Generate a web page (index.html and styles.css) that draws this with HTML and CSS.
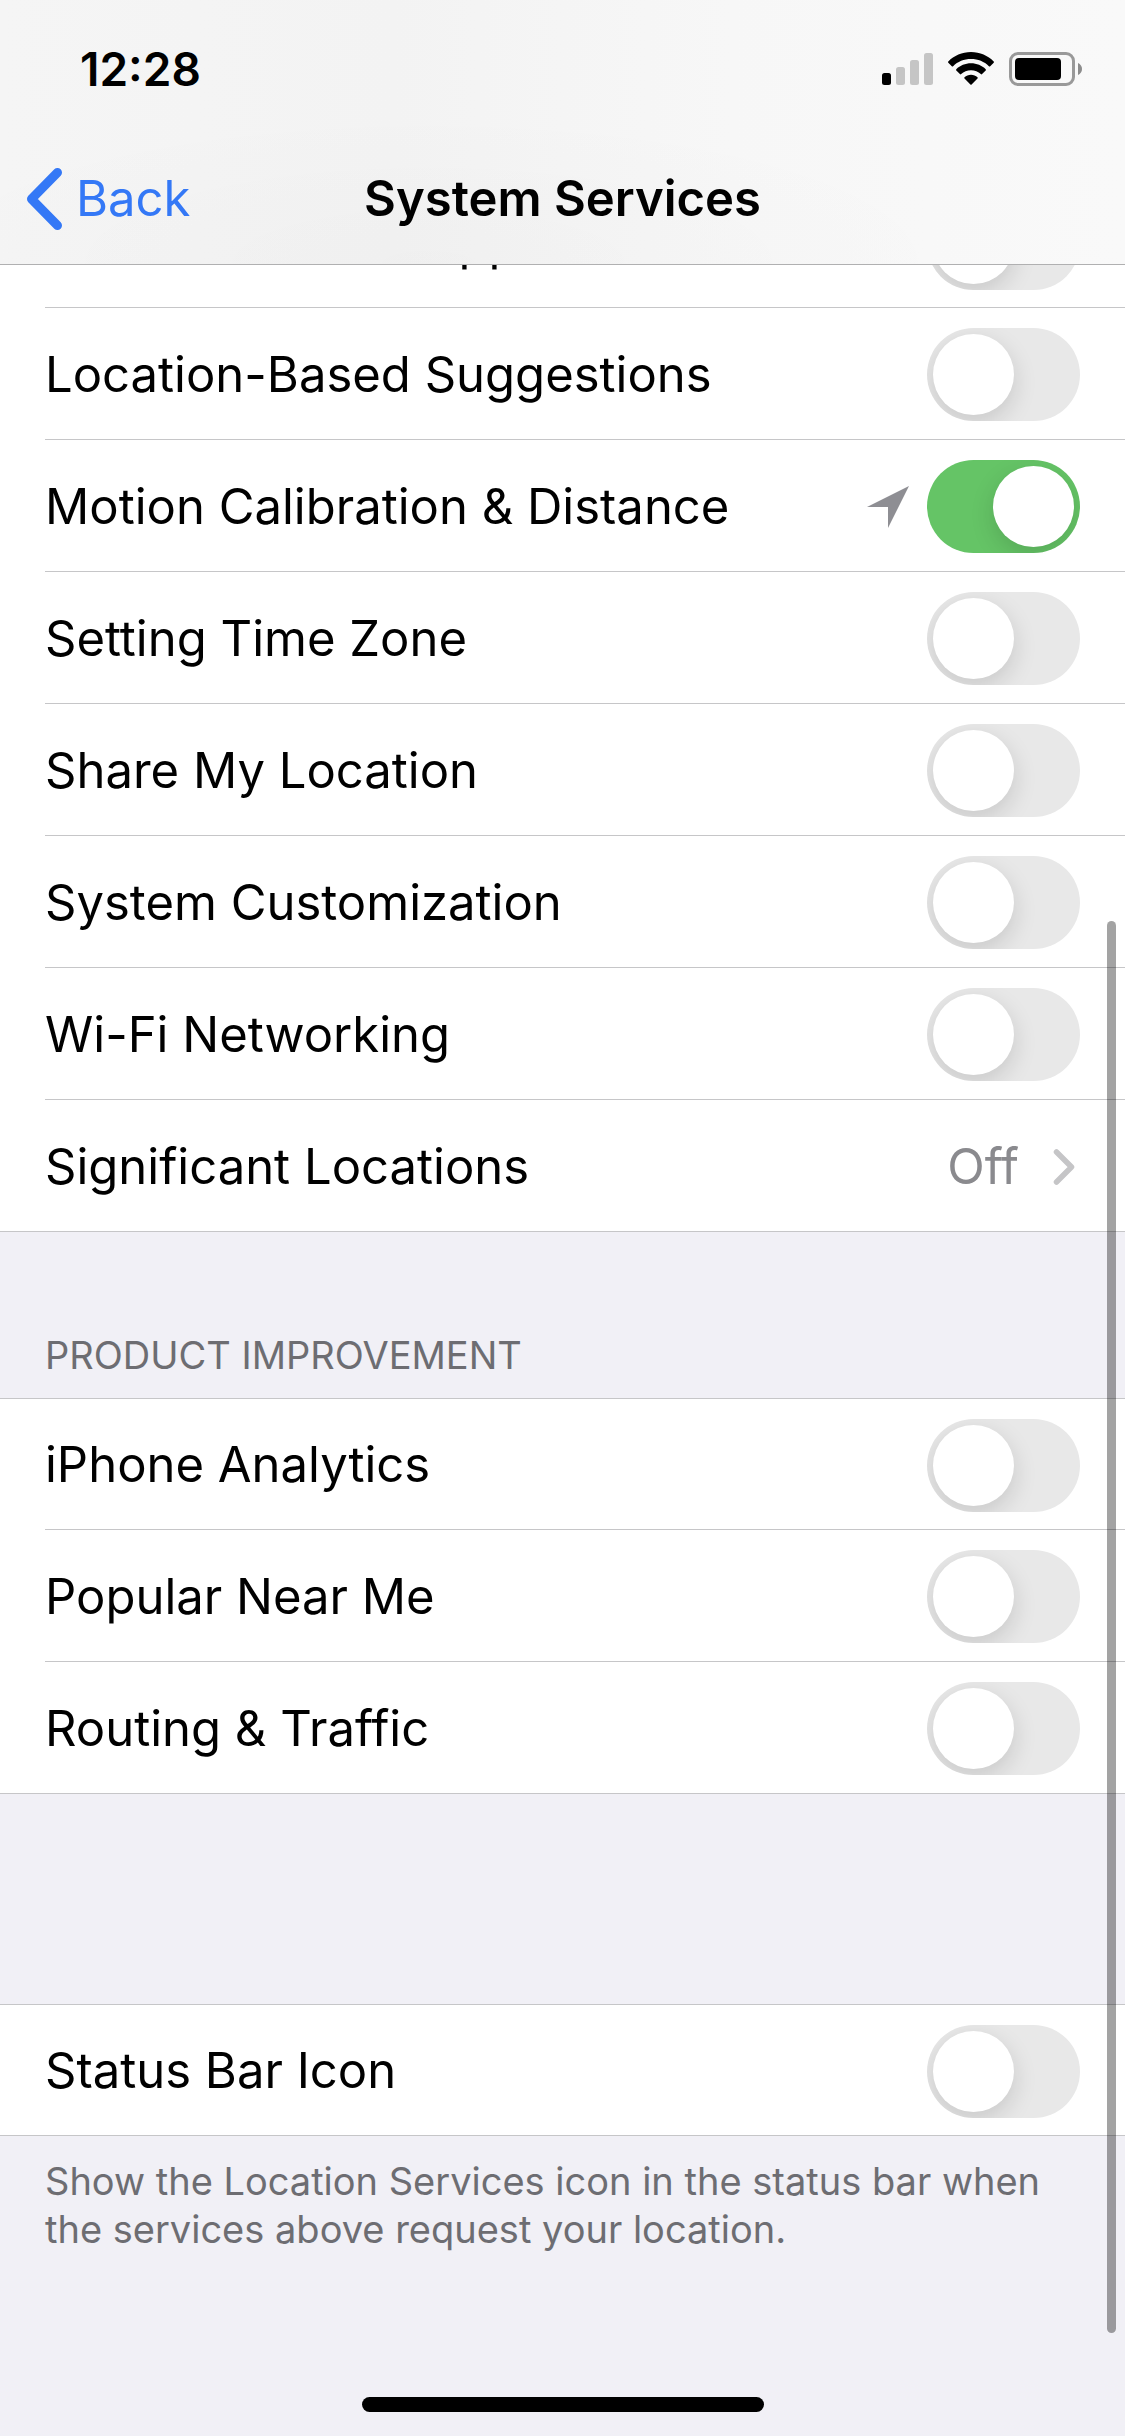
FILE: index.html
```html
<!DOCTYPE html>
<html lang="en">
<head>
<meta charset="utf-8">
<meta name="viewport" content="width=device-width, initial-scale=1">
<title>System Services</title>
<link rel="stylesheet" href="styles.css">
</head>
<body>
<header class="top-bar">
  <div class="status-bar">
    <time class="clock">12:28</time>
    <div class="status-icons">
      <svg width="51" height="34" viewBox="0 0 51 34" role="img" aria-label="Signal: one bar">
        <rect x="0" y="21" width="9" height="12" rx="2.5"/>
        <g fill="#c5c5c5">
          <rect x="14" y="15" width="9" height="18" rx="2.5"/>
          <rect x="28" y="8" width="9" height="25" rx="2.5"/>
          <rect x="42" y="1" width="9" height="32" rx="2.5"/>
        </g>
      </svg>
      <svg width="46" height="34" viewBox="0 0 46 34" role="img" aria-label="Wi-Fi">
        <path d="M23 0C14 0 6 3.6.3 9.4c-.4.4-.4.9 0 1.300l3.500 3.500c.4.4.9.4 1.300 0C9.700 9.700 16 7.100 23 7.100s13.300 2.600 17.900 7.100c.4.4.9.4 1.300 0l3.500-3.500c.4-.4.4-.9 0-1.300C40 3.600 32 0 23 0z"/>
        <path d="M23 11.300c-5.700 0-10.900 2.300-14.700 5.900-.4.400-.4.900 0 1.300l3.600 3.600c.4.400.9.400 1.300 0 2.500-2.400 6-3.800 9.800-3.800s7.300 1.400 9.800 3.800c.4.400.9.400 1.300 0l3.600-3.600c.4-.4.4-.9 0-1.300C33.900 13.600 28.700 11.300 23 11.300z"/>
        <path d="M23 22.800c-2.500 0-4.800.9-6.500 2.400-.4.400-.4.900 0 1.300l5.900 6c.4.400.8.400 1.200 0l5.900-6c.4-.4.4-.9 0-1.300-1.700-1.500-4-2.400-6.500-2.400z"/>
      </svg>
      <svg width="73" height="34" viewBox="0 0 73 34" role="img" aria-label="Battery">
        <rect x="1.500" y="1.500" width="63" height="31" rx="7.500" fill="none" stroke="#999" stroke-width="3"/>
        <rect x="6" y="6" width="46" height="22" rx="4"/>
        <path d="M69 11c2.500 1 4 3.400 4 6s-1.500 5-4 6z" fill="#8c8c8c"/>
      </svg>
    </div>
  </div>
  <nav class="nav-bar">
    <a class="back" href="#">
      <svg width="38" height="64" viewBox="0 0 38 64" aria-hidden="true"><path d="M32.500 5.500L6.500 32l26 26.500" fill="none" stroke="currentColor" stroke-width="9" stroke-linecap="round" stroke-linejoin="round"/></svg>
      <span>Back</span>
    </a>
    <h1 class="title">System Services</h1>
  </nav>
</header>

<main class="content">
  <ul class="group group-scrolled">
    <li><label class="row"><span class="name">Location-Based Apple Ads</span><input class="switch" type="checkbox" role="switch"></label></li>
    <li><label class="row"><span class="name">Location-Based Suggestions</span><input class="switch" type="checkbox" role="switch"></label></li>
    <li><label class="row"><span class="name">Motion Calibration &amp; Distance</span>
      <svg class="arrow" width="42" height="42" viewBox="0 0 42 42" aria-hidden="true"><path d="M42 0L21 42V21H0z" fill="#8e8e93"/></svg>
      <input class="switch" type="checkbox" role="switch" checked></label></li>
    <li><label class="row"><span class="name">Setting Time Zone</span><input class="switch" type="checkbox" role="switch"></label></li>
    <li><label class="row"><span class="name">Share My Location</span><input class="switch" type="checkbox" role="switch"></label></li>
    <li><label class="row"><span class="name">System Customization</span><input class="switch" type="checkbox" role="switch"></label></li>
    <li><label class="row"><span class="name">Wi-Fi Networking</span><input class="switch" type="checkbox" role="switch"></label></li>
    <li><a class="row" href="#"><span class="name">Significant Locations</span><span class="value">Off</span>
      <svg class="chevron" width="22" height="38" viewBox="0 0 22 38" aria-hidden="true"><path d="M3.500 4L18.500 19l-15 15" fill="none" stroke="#c5c5c7" stroke-width="5.500" stroke-linecap="round" stroke-linejoin="round"/></svg></a></li>
  </ul>

  <section>
    <h2 class="group-title">PRODUCT IMPROVEMENT</h2>
    <ul class="group">
      <li><label class="row"><span class="name">iPhone Analytics</span><input class="switch" type="checkbox" role="switch"></label></li>
      <li><label class="row"><span class="name">Popular Near Me</span><input class="switch" type="checkbox" role="switch"></label></li>
      <li><label class="row"><span class="name">Routing &amp; Traffic</span><input class="switch" type="checkbox" role="switch"></label></li>
    </ul>
  </section>

  <section class="status-section">
    <ul class="group">
      <li><label class="row"><span class="name">Status Bar Icon</span><input class="switch" type="checkbox" role="switch"></label></li>
    </ul>
    <p class="note">Show the Location Services icon in the status bar when the services above request your location.</p>
  </section>
</main>

<div class="scroll-thumb"></div>
<div class="home-indicator"></div>
</body>
</html>
```

FILE: styles.css
```css
* { box-sizing: border-box; }

body {
  margin: 0;
  min-height: 100vh;
  background: #f1f0f6;
  color: #000;
  font-family: Inter, "Liberation Sans", sans-serif;
  font-size: 49px;
  line-height: 60px;
}

svg { display: block; flex: none; }
a { color: inherit; text-decoration: none; }
h1, h2, p, ul { margin: 0; padding: 0; }
ul { list-style: none; }

/* Top bar */
.top-bar {
  border-bottom: 1px solid #b0b0b1;
  background:
    radial-gradient(ellipse 50% 60% at 38% 100%, rgba(0, 0, 0, .015), transparent),
    linear-gradient(90deg, #f5f5f5, #f3f3f3 35%, #f7f7f7 65%, #f9f9f9);
}

.status-bar {
  display: flex;
  align-items: center;
  justify-content: space-between;
  height: 132px;
  padding: 6px 43px 0 80px;
}

.clock { font-size: 46px; font-weight: 600; }
.status-icons { display: flex; gap: 15px; }

.nav-bar {
  display: grid;
  grid-template-columns: 1fr auto 1fr;
  align-items: center;
  height: 132px;
  padding: 2px 25px 0;
}

.back {
  display: flex;
  align-items: center;
  gap: 13px;
  color: #3478f6;
}

.title { font-size: 49px; font-weight: 600; }

/* The list is scrolled, so its first row is cut off at the top bar */
.content { overflow: hidden; }
.group-scrolled { margin-top: -89px; }

.group {
  background: #fff;
  border-bottom: 1px solid #c6c6c8;
}

.group li { padding-left: 45px; }
.group li:first-child { border-top: 1px solid #c6c6c8; }
.group li:first-child .row { height: 130px; }

.row {
  display: flex;
  align-items: center;
  padding: 2px 45px 0 0;
}

.group li + li .row {
  height: 132px;
  border-top: 1px solid #c6c6c8;
}

.name { flex: 1; }
.value { color: #8a8a8e; }
.arrow { margin-right: 18px; }
.chevron { margin: 0 5px 0 34px; }

.switch {
  appearance: none;
  position: relative;
  flex: none;
  width: 153px;
  height: 93px;
  margin: 0;
  border-radius: 47px;
  background: #e8e8e8;
  overflow: hidden;
}

.switch::before {
  content: "";
  position: absolute;
  top: 6px;
  left: 6px;
  width: 81px;
  height: 81px;
  border-radius: 50%;
  background: #fff;
  box-shadow: 0 8px 24px rgba(0, 0, 0, .14);
}

.switch:checked { background: #65c466; }
.switch:checked::before { left: 66px; }

.group-title {
  padding: 99px 45px 19px;
  color: #6d6d72;
  font-size: 38px;
  font-weight: 400;
  line-height: 48px;
}

.status-section { padding-top: 210px; }

.note {
  padding: 21px 45px 0;
  color: #6d6d72;
  font-size: 38px;
  line-height: 48px;
}

/* Overlays */
.scroll-thumb {
  position: fixed;
  z-index: 1;
  right: 9px;
  top: 921px;
  bottom: 103px;
  width: 9px;
  border-radius: 5px;
  background: rgba(0, 0, 0, .36);
}

.home-indicator {
  position: fixed;
  z-index: 1;
  left: 50%;
  bottom: 24px;
  width: 402px;
  height: 15px;
  margin-left: -201px;
  border-radius: 8px;
  background: #000;
}
```
